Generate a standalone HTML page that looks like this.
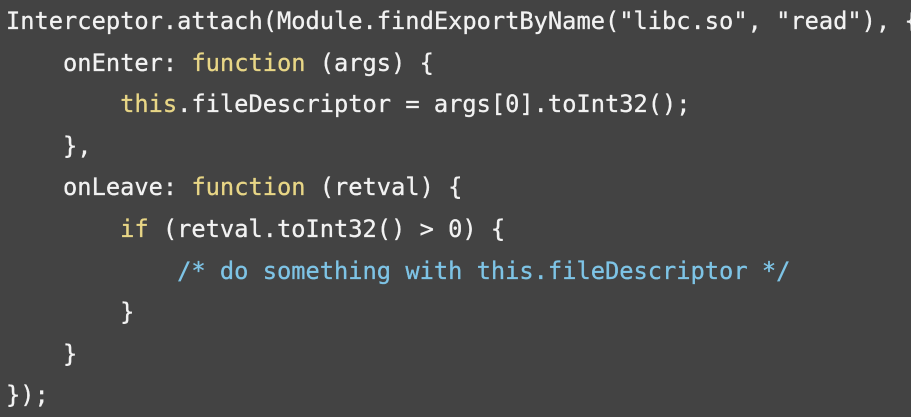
<!DOCTYPE html>
<html><head><meta charset="utf-8"><style>
html,body{margin:0;padding:0;width:911px;height:404px;overflow:hidden;background:#434343;}
pre{margin:0;position:absolute;left:6px;top:1px;font-family:"DejaVu Sans Mono","Liberation Mono",monospace;font-size:23.7px;line-height:41.6px;color:#f2f2f2;white-space:pre;-webkit-text-stroke:0.3px currentColor;}
.k{color:#e8d686;}
.c{color:#7ec4e6;}
</style></head><body>
<pre>Interceptor.attach(Module.findExportByName("libc.so", "read"), {
    onEnter: <span class="k">function</span> (args) {
        <span class="k">this</span>.fileDescriptor = args[0].toInt32();
    },
    onLeave: <span class="k">function</span> (retval) {
        <span class="k">if</span> (retval.toInt32() &gt; 0) {
            <span class="c">/* do something with this.fileDescriptor */</span>
        }
    }
});</pre>
</body></html>
